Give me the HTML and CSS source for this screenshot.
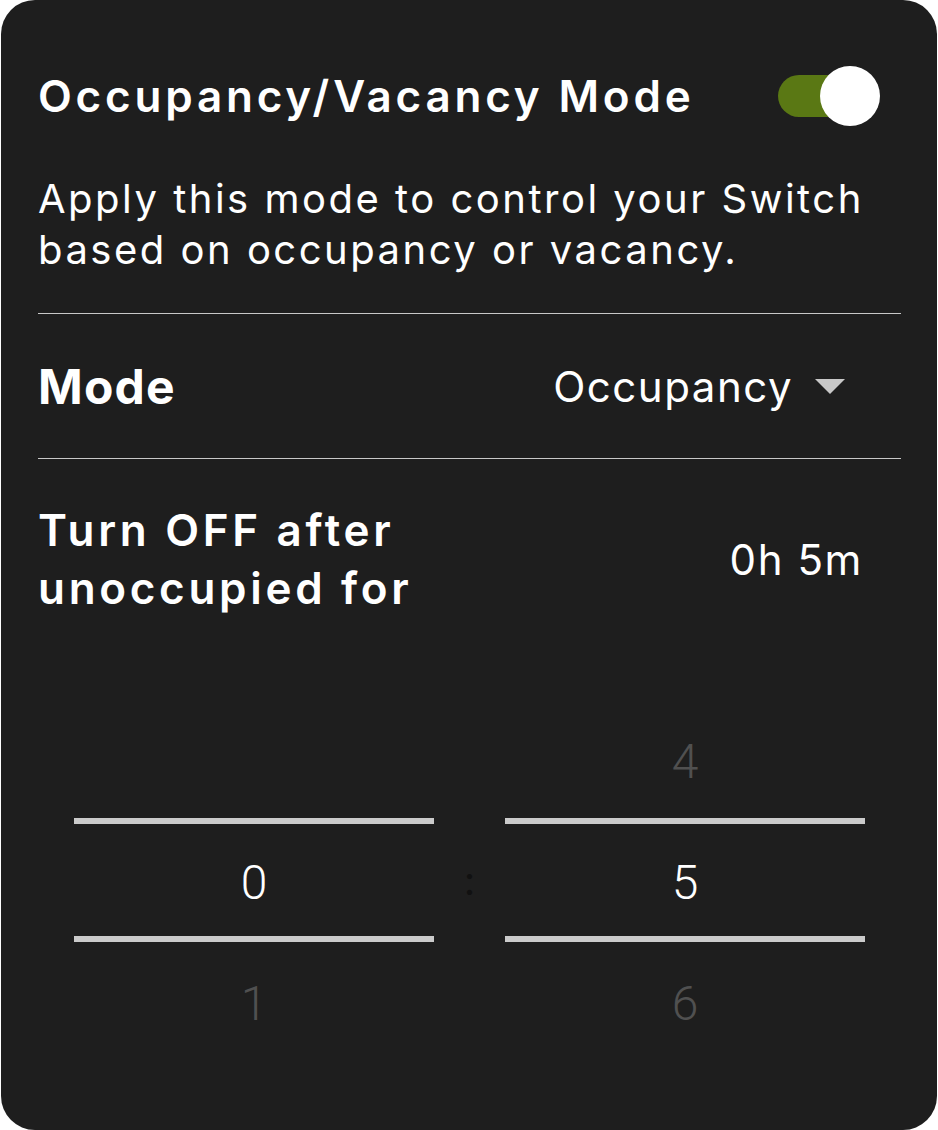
FILE: index.html
```html
<!DOCTYPE html>
<html lang="en">
<head>
  <meta charset="UTF-8" />
  <meta name="viewport" content="width=device-width, initial-scale=1.0"/>
  <title>Occupancy/Vacancy Mode</title>
  <link rel="stylesheet" href="styles.css">
</head>
<body>
  <div class="card">
    <header class="header">
      <h1 class="title">Occupancy/Vacancy Mode</h1>
      <div class="toggle on"><span class="knob"></span></div>
    </header>

    <p class="desc">Apply this mode to control your Switch<br>based on occupancy or vacancy.</p>

    <div class="row mode-row">
      <span class="label">Mode</span>
      <span class="select">Occupancy<span class="caret"></span></span>
    </div>

    <div class="row timer-row">
      <span class="label">Turn OFF after<br>unoccupied for</span>
      <span class="value">0h 5m</span>
    </div>

    <section class="picker">
      <div class="wheel">
        <div class="item"></div>
        <div class="item selected">0</div>
        <div class="item">1</div>
      </div>
      <div class="sep">:</div>
      <div class="wheel">
        <div class="item">4</div>
        <div class="item selected">5</div>
        <div class="item">6</div>
      </div>
    </section>
  </div>
</body>
</html>
```

FILE: styles.css
```css
body {
  margin: 0;
  background-color: #fff;
  font-family: Inter, "Noto Sans", sans-serif;
  color: #fff;
}
.card {
  width: 936px;
  height: 1130px;
  margin-left: 1px;
  box-sizing: border-box;
  background-color: #1e1e1e;
  border-radius: 34px;
  padding: 66px 36px 0 37px;
}
.header {
  display: flex;
  align-items: center;
  justify-content: space-between;
  height: 60px;
  padding-right: 41px;
}
.title {
  margin: 0;
  font-size: 44px;
  font-weight: 600;
  line-height: 60px;
  letter-spacing: 3.8px;
}
.toggle {
  position: relative;
  width: 82px;
  height: 42px;
  border-radius: 21px;
  background-color: #5a7814;
}
.toggle .knob {
  position: absolute;
  right: -20px;
  top: -9px;
  width: 60px;
  height: 60px;
  border-radius: 50%;
  background-color: #fff;
}
.desc {
  margin: 47px 0 38px;
  font-size: 40px;
  line-height: 51px;
  letter-spacing: 2.5px;
}
.row {
  display: flex;
  align-items: center;
  justify-content: space-between;
  border-top: 1px solid #c8c8c8;
}
.mode-row {
  height: 144px;
  padding-right: 56px;
}
.mode-row .label {
  font-size: 48px;
  font-weight: 700;
  letter-spacing: 1.2px;
}
.select {
  display: flex;
  align-items: center;
  gap: 22px;
  font-size: 42px;
  letter-spacing: 1.5px;
}
.caret {
  width: 0;
  height: 0;
  border-left: 15px solid transparent;
  border-right: 15px solid transparent;
  border-top: 15px solid #c8c8c8;
}
.timer-row {
  padding: 42px 38px 0 0;
}
.timer-row .label {
  font-size: 44px;
  font-weight: 600;
  line-height: 58px;
  letter-spacing: 3.7px;
}
.value {
  font-size: 42px;
  letter-spacing: 1.6px;
}
.picker {
  display: flex;
  justify-content: space-between;
  margin-top: 83px;
  padding: 0 36px;
}
.wheel {
  width: 360px;
  display: flex;
  flex-direction: column;
}
.item {
  height: 118px;
  display: flex;
  align-items: center;
  justify-content: center;
  padding-top: 4px;
  box-sizing: border-box;
  font-family: Roboto, sans-serif;
  font-weight: 300;
  font-size: 48px;
  color: #505050;
}
.item.selected {
  color: #fff;
  border-top: 6px solid #cbcbcb;
  border-bottom: 6px solid #cbcbcb;
  height: 124px;
}
.sep {
  display: flex;
  align-items: center;
  color: #111;
  font-size: 40px;
}
```
